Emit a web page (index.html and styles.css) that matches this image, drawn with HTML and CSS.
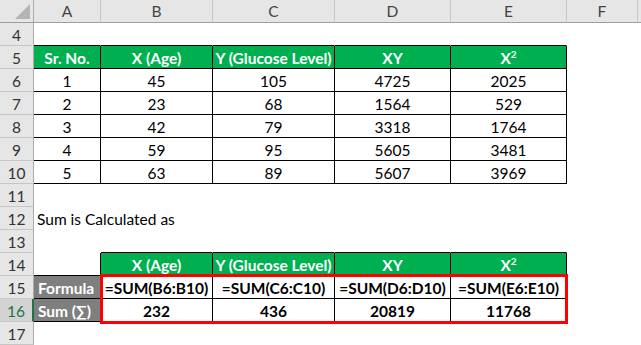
FILE: index.html
```html
<!DOCTYPE html>
<html>
<head>
<meta charset="utf-8">
<link rel="stylesheet" href="styles.css">
</head>
<body>
<div class="sheet">
  <div class="corner"><svg width="15" height="15" viewBox="0 0 15 15"><polygon points="15,0 15,15 0,15" fill="#b4b4b4"/></svg></div>
  <div class="ch">A</div><div class="ch">B</div><div class="ch">C</div><div class="ch">D</div><div class="ch">E</div><div class="ch">F</div><div class="ch last"></div>

  <div class="rh">4</div><div class="c tb"></div><div class="c tb"></div><div class="c tb"></div><div class="c tb"></div><div class="c tb"></div><div class="c"></div><div class="c"></div>

  <div class="rh">5</div><div class="g">Sr. No.</div><div class="g">X (Age)</div><div class="g">Y (Glucose Level)</div><div class="g">XY</div><div class="g">X<sup>2</sup></div><div class="c"></div><div class="c"></div>

  <div class="rh">6</div><div class="t">1</div><div class="t">45</div><div class="t">105</div><div class="t">4725</div><div class="t">2025</div><div class="c"></div><div class="c"></div>
  <div class="rh">7</div><div class="t">2</div><div class="t">23</div><div class="t">68</div><div class="t">1564</div><div class="t">529</div><div class="c"></div><div class="c"></div>
  <div class="rh">8</div><div class="t">3</div><div class="t">42</div><div class="t">79</div><div class="t">3318</div><div class="t">1764</div><div class="c"></div><div class="c"></div>
  <div class="rh">9</div><div class="t">4</div><div class="t">59</div><div class="t">95</div><div class="t">5605</div><div class="t">3481</div><div class="c"></div><div class="c"></div>
  <div class="rh">10</div><div class="t">5</div><div class="t">63</div><div class="t">89</div><div class="t">5607</div><div class="t">3969</div><div class="c"></div><div class="c"></div>

  <div class="rh">11</div><div class="c"></div><div class="c"></div><div class="c"></div><div class="c"></div><div class="c"></div><div class="c"></div><div class="c"></div>
  <div class="rh">12</div><div class="c text">Sum is Calculated as</div><div class="c"></div><div class="c"></div><div class="c"></div><div class="c"></div><div class="c"></div><div class="c"></div>
  <div class="rh">13</div><div class="c"></div><div class="c tb"></div><div class="c tb"></div><div class="c tb"></div><div class="c tb"></div><div class="c"></div><div class="c"></div>

  <div class="rh">14</div><div class="c tb tr"></div><div class="g">X (Age)</div><div class="g">Y (Glucose Level)</div><div class="g">XY</div><div class="g">X<sup>2</sup></div><div class="c"></div><div class="c"></div>

  <div class="rh">15</div><div class="gr">Formula</div><div class="t b">=SUM(B6:B10)</div><div class="t b">=SUM(C6:C10)</div><div class="t b">=SUM(D6:D10)</div><div class="t b">=SUM(E6:E10)</div><div class="c"></div><div class="c"></div>
  <div class="rh active">16</div><div class="gr">Sum (∑)</div><div class="t b">232</div><div class="t b">436</div><div class="t b">20819</div><div class="t b">11768</div><div class="c"></div><div class="c"></div>

  <div class="rh">17</div><div class="c"></div><div class="c"></div><div class="c"></div><div class="c"></div><div class="c"></div><div class="c"></div><div class="c"></div>

  <div class="highlight"></div>
</div>
</body>
</html>
```

FILE: styles.css
```css
html, body {
  margin: 0;
  padding: 0;
  background: #ffffff;
}

.sheet {
  position: relative;
  width: 641px;
  height: 345px;
  overflow: hidden;
  display: grid;
  grid-template-columns: 34px 67px 112px 122px 116px 116px 71px 1fr;
  grid-auto-rows: 23px;
  font-family: Lato, "Liberation Sans", sans-serif;
  font-size: 15.5px;
  color: #000;
}

.sheet > div {
  box-sizing: border-box;
  line-height: 22px;
  white-space: nowrap;
}

.corner {
  background: #e6e6e6;
  border-right: 1px solid #ababab;
  border-bottom: 1px solid #9e9e9e;
  display: flex;
  align-items: flex-end;
  justify-content: flex-end;
  padding: 0 3px 3px 0;
}

.corner svg {
  display: block;
}

.ch {
  background: #e6e6e6;
  border-right: 1px solid #c6c6c6;
  border-bottom: 1px solid #9e9e9e;
  text-align: center;
  color: #444;
  font-size: 15.5px;
}

.ch.last {
  border-right: none;
}

.rh {
  background: #e6e6e6;
  border-right: 1px solid #ababab;
  border-bottom: 1px solid #c6c6c6;
  text-align: center;
  color: #333;
  font-size: 15.5px;
  padding-top: 1px;
}

.rh.active {
  background: #d3d3d3;
  color: #217346;
  border-right: 2px solid #217346;
}

.c {
  border-right: 1px solid transparent;
  border-bottom: 1px solid transparent;
}

.c.tb {
  border-bottom-color: #000;
}

.c.tr {
  border-right-color: #000;
}

.c.text {
  overflow: visible;
  padding-left: 3px;
  padding-top: 1px;
}

.t {
  border-right: 1px solid #000;
  border-bottom: 1px solid #000;
  text-align: center;
  padding-top: 1px;
}

.t.b {
  font-weight: bold;
}

.g {
  background: #00b050;
  color: #fff;
  font-weight: bold;
  border-right: 1px solid #000;
  border-bottom: 1px solid #000;
  text-align: center;
  padding-top: 1px;
}

.g sup {
  font-size: 10px;
  line-height: 0;
  vertical-align: 6px;
}

.gr {
  background: #7f7f7f;
  color: #fff;
  font-weight: bold;
  border-right: 1px solid #000;
  border-bottom: 1px solid #000;
  padding-left: 4px;
  padding-top: 1px;
}

.highlight {
  position: absolute;
  left: 100px;
  top: 274px;
  width: 468px;
  height: 50px;
  border: 3px solid #ff0000;
  box-sizing: border-box;
}
```
